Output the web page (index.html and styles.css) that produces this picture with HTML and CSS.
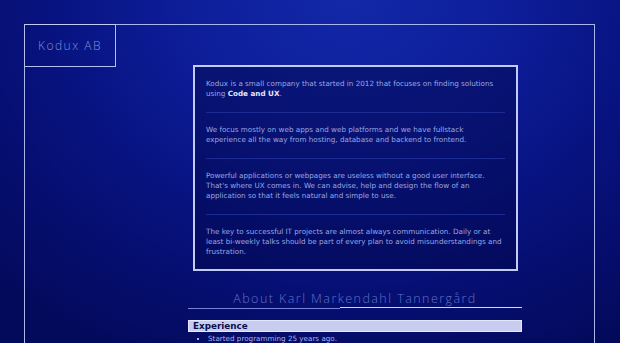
FILE: index.html
```html
<!DOCTYPE html>
<html lang="en">
<head>
    <meta charset="UTF-8">
    <meta name="viewport" content="width=device-width, initial-scale=1.0">
    <title>Kodux AB</title>
    <link rel="stylesheet" href="styles.css">
</head>
<body>
    <div class="frame">
        <header class="logo">
            <span>Kodux AB</span>
        </header>
        <div class="column">
            <div class="intro">
                <p>Kodux is a small company that started in 2012 that focuses on finding solutions using <strong>Code and UX</strong>.</p>
                <hr>
                <p>We focus mostly on web apps and web platforms and we have fullstack experience all the way from hosting, database and backend to frontend.</p>
                <hr>
                <p>Powerful applications or webpages are useless without a good user interface. That's where UX comes in. We can advise, help and design the flow of an application so that it feels natural and simple to use.</p>
                <hr>
                <p>The key to successful IT projects are almost always communication. Daily or at least bi-weekly talks should be part of every plan to avoid misunderstandings and frustration.</p>
            </div>
            <h2 class="about">About Karl Markendahl Tannergård</h2>
            <div class="about-line"><span></span><span></span></div>
            <h3 class="section">Experience</h3>
            <ul class="list">
                <li>Started programming 25 years ago.</li>
            </ul>
        </div>
    </div>
</body>
</html>
```

FILE: styles.css
```css
html, body {
    height: 100%;
}
body {
    margin: 0;
    padding: 24px 25px 0 24px;
    box-sizing: border-box;
    overflow: hidden;
    font-family: "DejaVu Sans", Verdana, sans-serif;
    background: radial-gradient(ellipse 80% 115% at 56% 0%, #1228a8 0%, #0d1d98 35%, #07127e 62%, #030a5c 100%);
    background-color: #030a5c;
}
.frame {
    border: 1px solid #aab6ea;
    border-bottom: none;
    min-height: 400px;
}
.logo {
    width: 90px;
    height: 41px;
    margin: -1px 0 0 -1px;
    border: 1px solid #b4bff0;
    border-top-color: #c4ccf4;
    display: flex;
    align-items: center;
    justify-content: center;
    box-sizing: content-box;
}
.logo span {
    color: #7f8fd2;
    font-family: "Open Sans", sans-serif;
    font-weight: 300;
    font-size: 12px;
    letter-spacing: 1.5px;
}
.column {
    width: 334px;
    margin: -2px 0 0 163px;
}
.intro {
    margin: 0 4px 0 5px;
    border: 2px solid #c3cbf2;
    background: rgba(2, 6, 70, 0.45);
    padding: 12px 11px 12px 11px;
    color: #9aa8e2;
    font-size: 7.2px;
    line-height: 10px;
    text-align: left;
}
.intro p {
    margin: 0;
}
.intro strong {
    color: #e0e6ff;
}
.intro hr {
    border: none;
    border-top: 1px solid #1c2c92;
    margin: 13px 0 12px 0;
}
.about {
    margin: 20px 0 0 0;
    text-align: center;
    font-family: "Open Sans", sans-serif;
    font-weight: 300;
    font-size: 12.5px;
    letter-spacing: 1.45px;
    color: #6070c6;
    line-height: 16px;
}
.about-line {
    display: flex;
    margin-top: 0;
    height: 2px;
}
.about-line span {
    height: 1px;
}
.about-line span:first-child {
    width: 152px;
    background: #7384d8;
    margin-top: 1px;
}
.about-line span:last-child {
    flex: 1;
    background: #d0d8f8;
}
.section {
    margin: 11px 0 0 0;
    background: #c8cdf0;
    border: 1px solid #e4e8ff;
    color: #0a104c;
    font-size: 8.8px;
    font-weight: bold;
    line-height: 10px;
    padding: 0 4px;
}
.list {
    margin: 2px 0 0 0;
    padding: 0 0 0 20px;
    color: #a4b2ea;
    font-size: 7.2px;
    line-height: 10px;
    list-style: square;
}
```
